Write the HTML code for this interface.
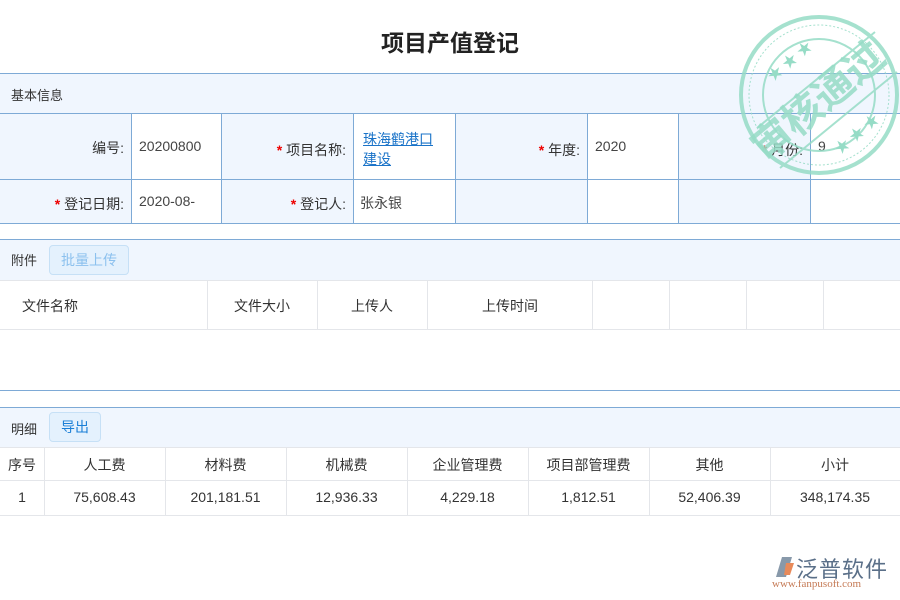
<!DOCTYPE html>
<html><head><meta charset="utf-8"><style>
*{margin:0;padding:0;box-sizing:border-box}
body{width:900px;height:600px;background:#fff;font-family:"Liberation Sans","Noto Sans CJK SC",sans-serif;font-size:14px;color:#333;position:relative;overflow:hidden}
.abs{position:absolute}
.title{left:0;width:900px;top:24px;text-align:center;font-size:23px;font-weight:bold;color:#222}
.hl{height:1px;background:#7eaad6;left:0;width:900px}
.vl{width:1px;background:#7eaad6}
.bar{background:#f0f6fe;left:0;width:900px}
.req{color:#e00;font-weight:bold}
.gl{height:1px;background:#e4e6ea;left:0;width:900px}
.gv{width:1px;background:#e4e6ea}
.btn{border:1px solid #c6e0f6;background:#e4f1fd;border-radius:4px;text-align:center;line-height:28px}
.c{text-align:center}
</style></head><body>
<div class="abs title">项目产值登记</div>
<div class="abs bar" style="top:73px;height:150px"></div>
<div class="abs" style="left:131px;top:113px;width:90px;height:110px;background:#fff"></div>
<div class="abs" style="left:353px;top:113px;width:102px;height:110px;background:#fff"></div>
<div class="abs" style="left:587px;top:113px;width:91px;height:110px;background:#fff"></div>
<div class="abs" style="left:810px;top:113px;width:90px;height:110px;background:#fff"></div>
<div class="abs hl" style="top:73px"></div>
<div class="abs hl" style="top:113px"></div>
<div class="abs hl" style="top:179px"></div>
<div class="abs hl" style="top:223px"></div>
<div class="abs hl" style="top:239px"></div>
<div class="abs vl" style="left:131px;top:113px;height:110px"></div>
<div class="abs vl" style="left:221px;top:113px;height:110px"></div>
<div class="abs vl" style="left:353px;top:113px;height:110px"></div>
<div class="abs vl" style="left:455px;top:113px;height:110px"></div>
<div class="abs vl" style="left:587px;top:113px;height:110px"></div>
<div class="abs vl" style="left:678px;top:113px;height:110px"></div>
<div class="abs vl" style="left:810px;top:113px;height:110px"></div>
<div class="abs" style="left:11px;top:85px;font-size:13px">基本信息</div>
<div class="abs" style="left:0;width:124px;top:138px;text-align:right">编号:</div>
<div class="abs" style="left:139px;top:138px;color:#444">20200800</div>
<div class="abs" style="left:221px;width:125px;top:140px;text-align:right"><span class="req">*</span> 项目名称:</div>
<div class="abs" style="left:363px;top:129px;color:#1a73c8;text-decoration:underline;line-height:20px;width:80px">珠海鹤港口<br>建设</div>
<div class="abs" style="left:455px;width:125px;top:140px;text-align:right"><span class="req">*</span> 年度:</div>
<div class="abs" style="left:595px;top:138px;color:#444">2020</div>
<div class="abs" style="left:678px;width:125px;top:140px;text-align:right"><span class="req">*</span> 月份:</div>
<div class="abs" style="left:818px;top:138px;color:#444">9</div>
<div class="abs" style="left:0;width:124px;top:194px;text-align:right"><span class="req">*</span> 登记日期:</div>
<div class="abs" style="left:139px;top:193px;color:#444">2020-08-</div>
<div class="abs" style="left:221px;width:125px;top:194px;text-align:right"><span class="req">*</span> 登记人:</div>
<div class="abs" style="left:360px;top:193px;color:#444">张永银</div>
<div class="abs bar" style="top:240px;height:40px"></div>
<div class="abs" style="left:11px;top:250px;font-size:13px">附件</div>
<div class="abs btn" style="left:49px;top:245px;width:80px;height:30px;color:#8cc1ee">批量上传</div>
<div class="abs gl" style="top:280px"></div>
<div class="abs gl" style="top:329px"></div>
<div class="abs gv" style="left:207px;top:280px;height:49px"></div>
<div class="abs gv" style="left:317px;top:280px;height:49px"></div>
<div class="abs gv" style="left:427px;top:280px;height:49px"></div>
<div class="abs gv" style="left:592px;top:280px;height:49px"></div>
<div class="abs gv" style="left:669px;top:280px;height:49px"></div>
<div class="abs gv" style="left:746px;top:280px;height:49px"></div>
<div class="abs gv" style="left:823px;top:280px;height:49px"></div>
<div class="abs" style="left:22px;top:296px">文件名称</div>
<div class="abs" style="left:234px;top:296px">文件大小</div>
<div class="abs" style="left:351px;top:296px">上传人</div>
<div class="abs" style="left:482px;top:296px">上传时间</div>
<div class="abs hl" style="top:390px"></div>
<div class="abs bar" style="top:407px;height:40px"></div>
<div class="abs hl" style="top:407px"></div>
<div class="abs" style="left:11px;top:419px;font-size:13px">明细</div>
<div class="abs btn" style="left:49px;top:412px;width:52px;height:30px;color:#1a7fd6">导出</div>
<div class="abs gl" style="top:447px"></div>
<div class="abs gl" style="top:480px"></div>
<div class="abs gl" style="top:515px"></div>
<div class="abs gv" style="left:44px;top:447px;height:68px"></div>
<div class="abs gv" style="left:165px;top:447px;height:68px"></div>
<div class="abs gv" style="left:286px;top:447px;height:68px"></div>
<div class="abs gv" style="left:407px;top:447px;height:68px"></div>
<div class="abs gv" style="left:528px;top:447px;height:68px"></div>
<div class="abs gv" style="left:649px;top:447px;height:68px"></div>
<div class="abs gv" style="left:770px;top:447px;height:68px"></div>
<div class="abs" style="left:0;top:455px;width:900px;height:20px">
<span class="abs c" style="left:0;width:44px">序号</span>
<span class="abs c" style="left:44px;width:121px">人工费</span>
<span class="abs c" style="left:165px;width:121px">材料费</span>
<span class="abs c" style="left:286px;width:121px">机械费</span>
<span class="abs c" style="left:407px;width:121px">企业管理费</span>
<span class="abs c" style="left:528px;width:121px">项目部管理费</span>
<span class="abs c" style="left:649px;width:121px">其他</span>
<span class="abs c" style="left:770px;width:130px">小计</span>
</div>
<div class="abs" style="left:0;top:489px;width:900px;height:20px">
<span class="abs c" style="left:0;width:44px">1</span>
<span class="abs c" style="left:44px;width:121px">75,608.43</span>
<span class="abs c" style="left:165px;width:121px">201,181.51</span>
<span class="abs c" style="left:286px;width:121px">12,936.33</span>
<span class="abs c" style="left:407px;width:121px">4,229.18</span>
<span class="abs c" style="left:528px;width:121px">1,812.51</span>
<span class="abs c" style="left:649px;width:121px">52,406.39</span>
<span class="abs c" style="left:770px;width:130px">348,174.35</span>
</div>
<svg class="abs" style="left:735px;top:10px" width="165" height="170" viewBox="0 0 165 170">
<g fill="none" stroke="#96dcc6" opacity="0.85">
<circle cx="84" cy="85" r="78" stroke-width="4"/>
<circle cx="84" cy="85" r="70" stroke-width="1" stroke-dasharray="2 2"/>
<circle cx="84" cy="85" r="56" stroke-width="2"/>
<line x1="22" y1="118" x2="140" y2="22" stroke-width="2"/>
<line x1="45" y1="158" x2="162" y2="62" stroke-width="2"/>
</g>
<text x="0" y="0" transform="translate(92,102) rotate(-40)" text-anchor="middle" font-size="40" font-weight="bold" fill="#96dcc6" font-family="Noto Sans CJK SC,sans-serif" opacity="0.85">审核通过</text>
<text x="0" y="0" transform="translate(58,55) rotate(-40)" text-anchor="middle" font-size="15" fill="#96dcc6">★ ★ ★</text>
<text x="0" y="0" transform="translate(125,128) rotate(-40)" text-anchor="middle" font-size="15" fill="#96dcc6">★ ★ ★</text>
</svg>
<svg class="abs" style="left:770px;top:553px" width="26" height="26" viewBox="0 0 26 26"><path d="M6 24 L12 4 L22 4 L16 24Z" fill="#8899aa"/><path d="M16 10 L24 10 L20 22 L14 22Z" fill="#e88a5a"/></svg>
<div class="abs" style="left:796px;top:552px;font-size:22px;color:#5a6f88;letter-spacing:1px">泛普软件</div>
<div class="abs" style="left:772px;top:578px;font-size:11px;color:#c57a55;font-family:'Liberation Serif',serif">www.fanpusoft.com</div>
</body></html>
